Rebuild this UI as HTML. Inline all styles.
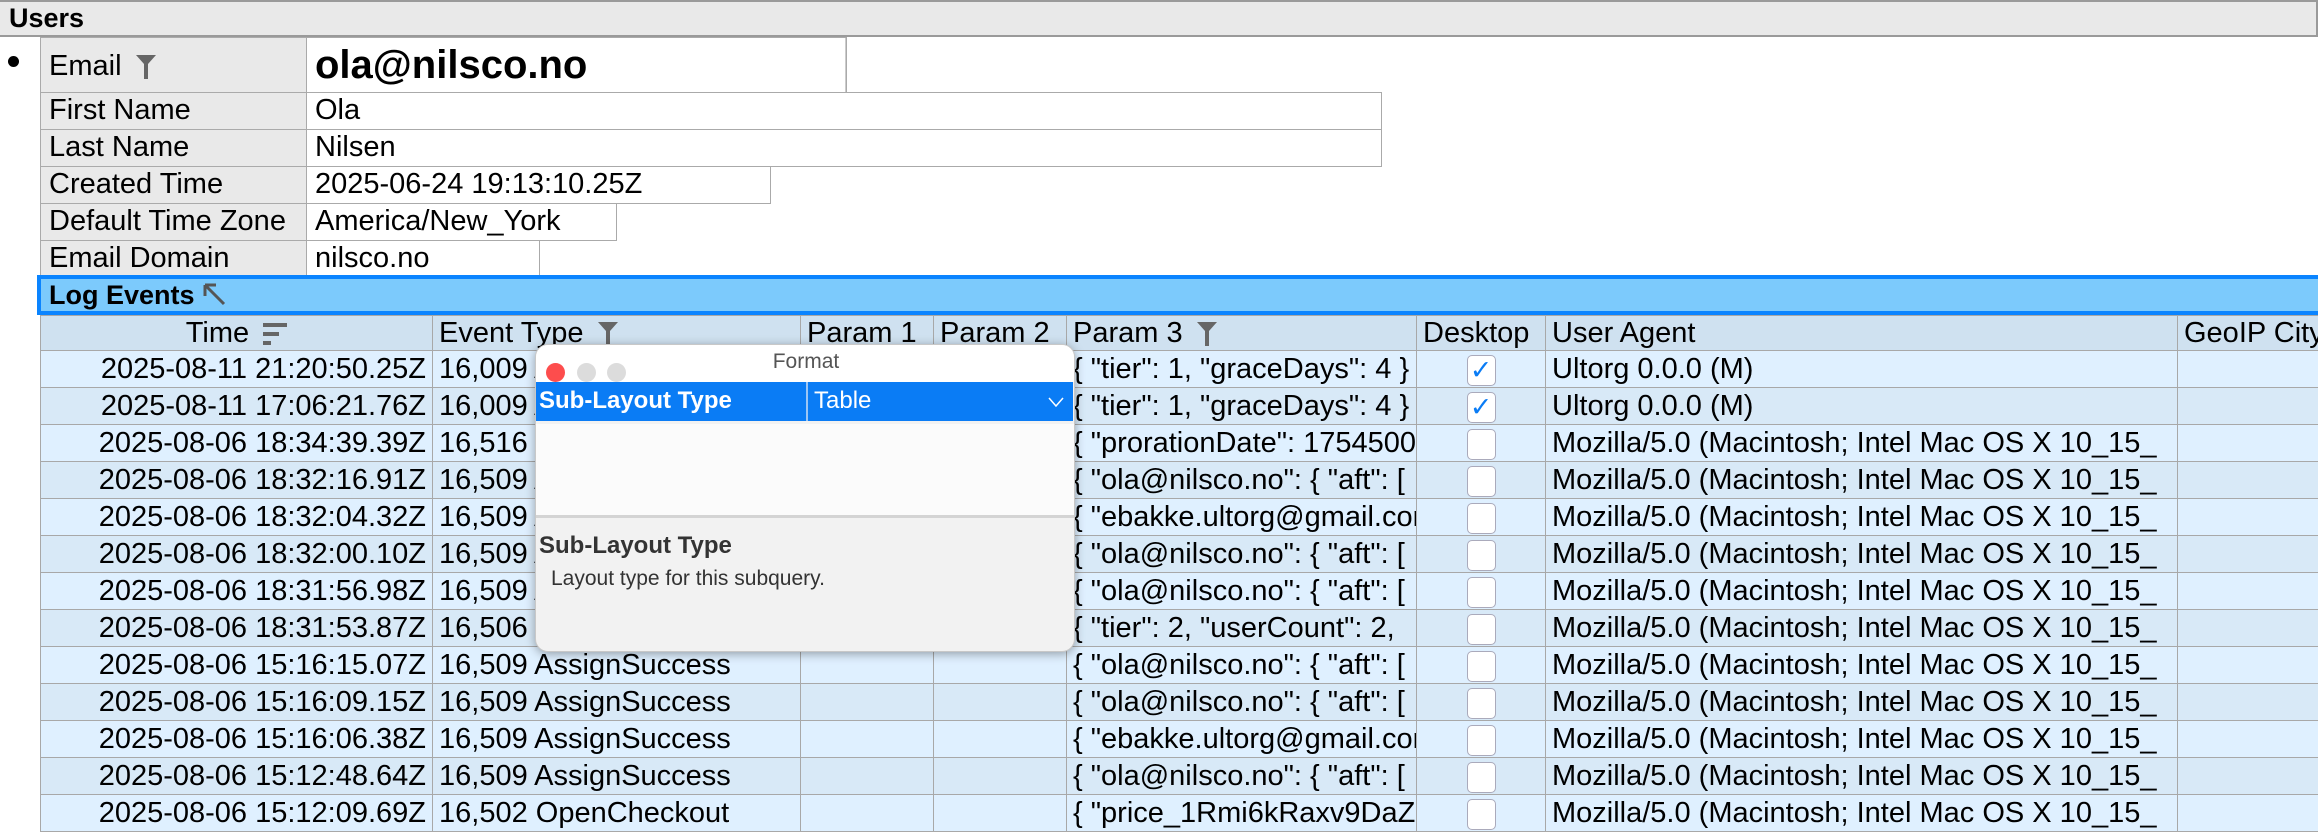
<!DOCTYPE html>
<html><head><meta charset="utf-8"><style>
*{box-sizing:border-box;margin:0;padding:0}
body{width:2318px;height:832px;overflow:hidden;background:#fff;font-family:"Liberation Sans",sans-serif;color:#000;position:relative}
.abs{position:absolute}
.hdr{left:0;top:0;width:2318px;height:37px;background:#e9e9e9;border:2px solid #9a9a9a;border-left:none;font-weight:bold;font-size:27px;line-height:33px;padding-left:9px}
.kv{position:absolute;left:40px;border:1.5px solid #aaa;font-size:29px;line-height:34px;white-space:nowrap}
.kv .k{position:absolute;left:0;top:0;bottom:0;width:266px;background:#e9e9e9;border-right:1.5px solid #aaa;padding-left:8px}
.kv .v{position:absolute;left:266px;top:0;bottom:0;padding-left:8px;background:#fff}
.bar{left:37px;top:275px;width:2290px;height:40px;background:#7ccafc;border:4px solid #0a84ff;font-weight:bold;font-size:27px;line-height:32px;padding-left:8px}
table{position:absolute;left:40px;top:315px;width:2297px;border-collapse:collapse;table-layout:fixed;font-size:29px}
td,th{height:37px;border:1.5px solid #a8a8a8;white-space:nowrap;overflow:hidden;padding:0 6px;font-weight:normal;text-align:left;line-height:34px}
th{background:#cfe1f0;height:35px}
tr.a td{background:#dff0ff}
tr.b td{background:#d8e9f7}
td.t{text-align:right}
.cb{display:inline-block;width:29px;height:31px;border:1.5px solid #aab;border-radius:5px;background:#fff;vertical-align:middle;position:relative;color:#0a7cf5;font-size:27px;line-height:28px;text-align:center}
.fun{display:inline-block;vertical-align:middle;margin-left:6px}
.dlg{left:535px;top:344px;width:540px;height:308px;background:#f2f2f2;border-radius:13px;box-shadow:0 2px 10px rgba(0,0,0,.35);border:1px solid #c8c8c8;overflow:hidden}
.dot{position:absolute;top:18px;width:19px;height:19px;border-radius:50%}
</style></head><body>
<div class="abs hdr">Users</div>
<div class="abs" style="left:8px;top:56px;width:11px;height:11px;border-radius:50%;background:#000"></div>

<div class="kv" style="top:37px;width:807px;height:56px"><div class="k" style="line-height:56px">Email <svg class="fun" width="20" height="24" viewBox="0 0 20 24"><path d="M0 0H20L12 9V24H8V9Z" fill="#666"/></svg></div><div class="v" style="right:0;font-weight:bold;font-size:40px;line-height:54px;border-right:1.5px solid #ccc">ola@nilsco.no</div></div>
<div class="kv" style="top:92px;width:1342px;height:38px"><div class="k">First Name</div><div class="v">Ola</div></div>
<div class="kv" style="top:129px;width:1342px;height:38px"><div class="k">Last Name</div><div class="v">Nilsen</div></div>
<div class="kv" style="top:166px;width:731px;height:38px"><div class="k">Created Time</div><div class="v">2025-06-24 19:13:10.25Z</div></div>
<div class="kv" style="top:203px;width:577px;height:38px"><div class="k">Default Time Zone</div><div class="v">America/New_York</div></div>
<div class="kv" style="top:240px;width:500px;height:37px"><div class="k">Email Domain</div><div class="v">nilsco.no</div></div>

<div class="abs bar">Log Events <svg width="24" height="24" viewBox="0 0 24 24" style="vertical-align:-2px"><path d="M3 3L22 22M3 3V14M3 3H14" stroke="#555" stroke-width="3" fill="none"/></svg></div>

<table>
<colgroup><col style="width:392px"><col style="width:368px"><col style="width:133px"><col style="width:133px"><col style="width:350px"><col style="width:129px"><col style="width:632px"><col style="width:160px"></colgroup>
<tr><th style="text-align:center">Time <svg class="fun" width="24" height="22" viewBox="0 0 24 22"><rect x="0" y="0" width="24" height="4" fill="#666"/><rect x="0" y="9" width="16" height="4" fill="#666"/><rect x="0" y="18" width="8" height="4" fill="#666"/></svg></th><th>Event Type <svg class="fun" width="20" height="24" viewBox="0 0 20 24"><path d="M0 0H20L12 9V24H8V9Z" fill="#666"/></svg></th><th>Param 1</th><th>Param 2</th><th>Param 3 <svg class="fun" width="20" height="24" viewBox="0 0 20 24"><path d="M0 0H20L12 9V24H8V9Z" fill="#666"/></svg></th><th>Desktop</th><th>User Agent</th><th>GeoIP City</th></tr>
<tr class="a"><td class="t">2025-08-11 21:20:50.25Z</td><td>16,009 AssignSuccess</td><td></td><td></td><td>{ "tier": 1, "graceDays": 4 }</td><td style="text-align:center"><span class="cb">✓</span></td><td>Ultorg 0.0.0 (M)</td><td></td></tr>
<tr class="b"><td class="t">2025-08-11 17:06:21.76Z</td><td>16,009 AssignSuccess</td><td></td><td></td><td>{ "tier": 1, "graceDays": 4 }</td><td style="text-align:center"><span class="cb">✓</span></td><td>Ultorg 0.0.0 (M)</td><td></td></tr>
<tr class="a"><td class="t">2025-08-06 18:34:39.39Z</td><td>16,516 Proration</td><td></td><td></td><td>{ "prorationDate": 1754500</td><td style="text-align:center"><span class="cb"></span></td><td>Mozilla/5.0 (Macintosh; Intel Mac OS X 10_15_</td><td></td></tr>
<tr class="b"><td class="t">2025-08-06 18:32:16.91Z</td><td>16,509 AssignSuccess</td><td></td><td></td><td>{ "ola@nilsco.no": { "aft": [</td><td style="text-align:center"><span class="cb"></span></td><td>Mozilla/5.0 (Macintosh; Intel Mac OS X 10_15_</td><td></td></tr>
<tr class="a"><td class="t">2025-08-06 18:32:04.32Z</td><td>16,509 AssignSuccess</td><td></td><td></td><td>{ "ebakke.ultorg@gmail.com</td><td style="text-align:center"><span class="cb"></span></td><td>Mozilla/5.0 (Macintosh; Intel Mac OS X 10_15_</td><td></td></tr>
<tr class="b"><td class="t">2025-08-06 18:32:00.10Z</td><td>16,509 AssignSuccess</td><td></td><td></td><td>{ "ola@nilsco.no": { "aft": [</td><td style="text-align:center"><span class="cb"></span></td><td>Mozilla/5.0 (Macintosh; Intel Mac OS X 10_15_</td><td></td></tr>
<tr class="a"><td class="t">2025-08-06 18:31:56.98Z</td><td>16,509 AssignSuccess</td><td></td><td></td><td>{ "ola@nilsco.no": { "aft": [</td><td style="text-align:center"><span class="cb"></span></td><td>Mozilla/5.0 (Macintosh; Intel Mac OS X 10_15_</td><td></td></tr>
<tr class="b"><td class="t">2025-08-06 18:31:53.87Z</td><td>16,506 Upgrade</td><td></td><td></td><td>{ "tier": 2, "userCount": 2,</td><td style="text-align:center"><span class="cb"></span></td><td>Mozilla/5.0 (Macintosh; Intel Mac OS X 10_15_</td><td></td></tr>
<tr class="a"><td class="t">2025-08-06 15:16:15.07Z</td><td>16,509 AssignSuccess</td><td></td><td></td><td>{ "ola@nilsco.no": { "aft": [</td><td style="text-align:center"><span class="cb"></span></td><td>Mozilla/5.0 (Macintosh; Intel Mac OS X 10_15_</td><td></td></tr>
<tr class="b"><td class="t">2025-08-06 15:16:09.15Z</td><td>16,509 AssignSuccess</td><td></td><td></td><td>{ "ola@nilsco.no": { "aft": [</td><td style="text-align:center"><span class="cb"></span></td><td>Mozilla/5.0 (Macintosh; Intel Mac OS X 10_15_</td><td></td></tr>
<tr class="a"><td class="t">2025-08-06 15:16:06.38Z</td><td>16,509 AssignSuccess</td><td></td><td></td><td>{ "ebakke.ultorg@gmail.com</td><td style="text-align:center"><span class="cb"></span></td><td>Mozilla/5.0 (Macintosh; Intel Mac OS X 10_15_</td><td></td></tr>
<tr class="b"><td class="t">2025-08-06 15:12:48.64Z</td><td>16,509 AssignSuccess</td><td></td><td></td><td>{ "ola@nilsco.no": { "aft": [</td><td style="text-align:center"><span class="cb"></span></td><td>Mozilla/5.0 (Macintosh; Intel Mac OS X 10_15_</td><td></td></tr>
<tr class="a"><td class="t">2025-08-06 15:12:09.69Z</td><td>16,502 OpenCheckout</td><td></td><td></td><td>{ "price_1Rmi6kRaxv9DaZ</td><td style="text-align:center"><span class="cb"></span></td><td>Mozilla/5.0 (Macintosh; Intel Mac OS X 10_15_</td><td></td></tr>
</table>

<div class="abs dlg">
  <div class="abs" style="left:0;top:0;width:540px;height:37px;background:#fff"></div>
  <div class="dot" style="left:10px;background:#fd4d4d"></div>
  <div class="dot" style="left:41px;background:#dcdcdc"></div>
  <div class="dot" style="left:71px;background:#dcdcdc"></div>
  <div class="abs" style="left:0;width:540px;top:5px;text-align:center;font-size:21px;color:#555">Format</div>
  <div class="abs" style="left:0;top:37px;width:537px;height:39px;background:#0a7cf5;color:#fff;font-size:24px;line-height:38px">
    <span class="abs" style="left:3px;font-weight:bold">Sub-Layout Type</span>
    <span class="abs" style="left:270px;top:0;width:2px;height:39px;background:#9cc6f5"></span>
    <span class="abs" style="left:278px">Table</span>
    <svg class="abs" style="left:512px;top:15px" width="16" height="10" viewBox="0 0 16 10"><path d="M1 1L8 9L15 1" stroke="#fff" stroke-width="1.5" fill="none"/></svg>
  </div>
  <div class="abs" style="left:0;top:79px;width:540px;height:92px;background:#fbfbfb"></div>
  <div class="abs" style="left:0;top:170px;width:540px;height:3px;background:#d4d4d4"></div>
  <div class="abs" style="left:3px;top:187px;font-weight:bold;font-size:24px;color:#333">Sub-Layout Type</div>
  <div class="abs" style="left:15px;top:222px;font-size:21px;color:#333">Layout type for this subquery.</div>
</div>
</body></html>
